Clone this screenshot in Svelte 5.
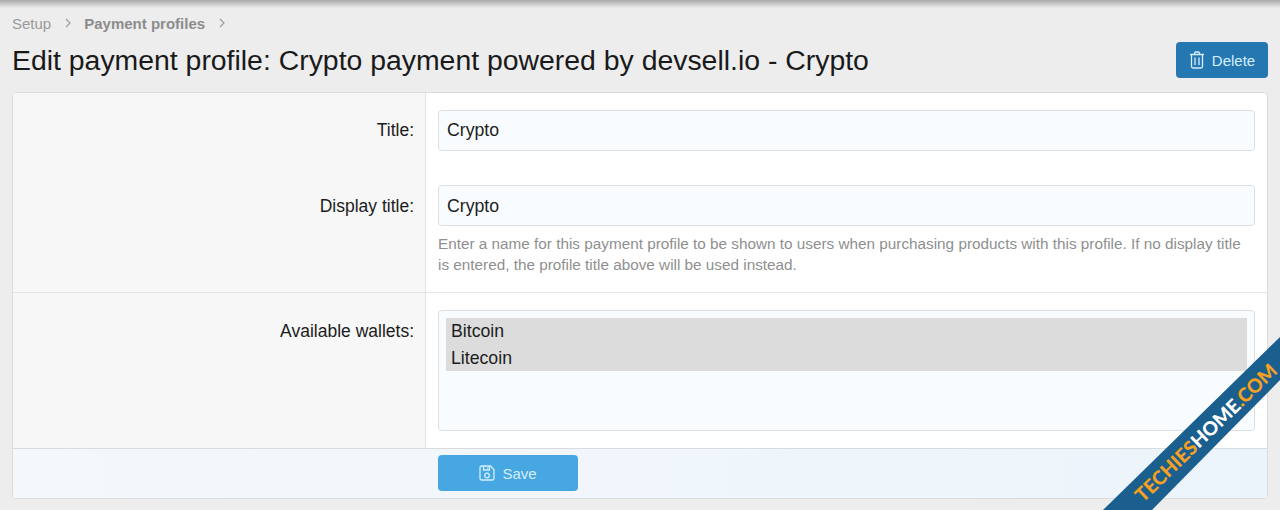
<script lang="ts">
  const wallets = ['Bitcoin', 'Litecoin'];
</script>

<div class="page">
  <div class="topbar"></div>

  <nav class="crumbs">
    <span class="crumb">Setup</span>
    <svg class="sep" viewBox="0 0 8 10"><path d="M2 1l4 4-4 4" /></svg>
    <span class="crumb current">Payment profiles</span>
    <svg class="sep" viewBox="0 0 8 10"><path d="M2 1l4 4-4 4" /></svg>
  </nav>

  <header class="head">
    <h1>Edit payment profile: Crypto payment powered by devsell.io - Crypto</h1>
    <button class="btn delete">
      <svg class="icon" viewBox="0 0 16 18">
        <path d="M1 3.500h14M2.500 3.500v12a1.500 1.500 0 0 0 1.500 1.500h8a1.500 1.500 0 0 0 1.500-1.500v-12M5.500 3.500V2.200a1.200 1.200 0 0 1 1.200-1.200h2.600a1.200 1.200 0 0 1 1.200 1.200v1.300M6 6.500v7.500M10 6.500v7.500" />
      </svg>
      Delete
    </button>
  </header>

  <section class="card">
    <div class="row first">
      <div class="label">Title:</div>
      <div class="field">
        <div class="input">Crypto</div>
      </div>
    </div>
    <div class="row second">
      <div class="label">Display title:</div>
      <div class="field">
        <div class="input">Crypto</div>
        <p class="help">Enter a name for this payment profile to be shown to users when purchasing products with this profile. If no display title is entered, the profile title above will be used instead.</p>
      </div>
    </div>
    <div class="row third">
      <div class="label">Available wallets:</div>
      <div class="field">
        <div class="listbox">
          {#each wallets as wallet}
            <div class="option">{wallet}</div>
          {/each}
        </div>
      </div>
    </div>
    <footer class="submit">
      <div class="submit-gap"></div>
      <button class="btn save">
        <svg class="icon" viewBox="0 0 16 16">
          <path d="M2.500 1h9L15 4.500v9a1.500 1.500 0 0 1-1.500 1.500h-11A1.500 1.500 0 0 1 1 13.500v-11A1.500 1.500 0 0 1 2.500 1zM4.500 1v4h6V1M8.700 2.400v1.300" />
          <circle cx="8" cy="10.500" r="2.300" />
        </svg>
        Save
      </button>
    </footer>
  </section>

  <svg class="ribbon" viewBox="0 0 180 175">
    <polygon points="3,175 180,2 180,45 52,175" class="band" />
    <text transform="translate(43 168) rotate(-44)" class="mark">TECHIES<tspan class="white">HOME</tspan>.COM</text>
  </svg>
</div>

<style>
  :global(body) {
    margin: 0;
    background: #ededed;
  }

  .page {
    position: relative;
    width: 1280px;
    height: 510px;
    overflow: hidden;
    font-family: "Liberation Sans", Arial, sans-serif;
    color: #1c1c1c;
    background: #ededed;
  }

  .topbar {
    height: 8px;
    background: linear-gradient(#a9a9a9, #ececec);
  }

  .crumbs {
    display: flex;
    align-items: center;
    gap: 12.500px;
    height: 30px;
    padding-left: 12px;
    font-size: 15px;
    color: #9a9a9a;
  }

  .current {
    font-weight: 700;
    color: #8c8c8c;
  }

  .sep {
    width: 8px;
    height: 10px;
    fill: none;
    stroke: #9a9a9a;
    stroke-width: 1.100;
  }

  .head {
    display: flex;
    align-items: center;
    justify-content: space-between;
    height: 44px;
    margin-bottom: 10px;
    padding: 0 12px;
  }

  h1 {
    margin: 0;
    font-size: 28.400px;
    font-weight: 400;
    color: #1a1a1a;
  }

  .btn {
    display: flex;
    align-items: center;
    justify-content: center;
    gap: 7px;
    height: 36px;
    border: 0;
    border-radius: 4px;
    font: inherit;
    font-size: 15px;
    color: #d5eefc;
  }

  .icon {
    fill: none;
    stroke: currentColor;
    stroke-width: 1.300;
  }

  .delete {
    width: 92px;
    background: #2577b1;
  }

  .delete .icon {
    width: 16px;
    height: 18px;
  }

  .save {
    width: 140px;
    margin-bottom: 1px;
    background: #47a7e2;
  }

  .save .icon {
    width: 16px;
    height: 16px;
  }

  .card {
    width: 1256px;
    height: 407px;
    margin-left: 12px;
    box-sizing: border-box;
    display: flex;
    flex-direction: column;
    border: 1px solid #dcdcdc;
    border-radius: 4px;
    overflow: hidden;
    background: #fff;
  }

  .row {
    display: grid;
    grid-template-columns: 413px 1fr;
  }

  .first { height: 75px; }
  .second { height: 124px; border-bottom: 1px solid #e4e4e4; }
  .third { flex: 1; }

  .label {
    background: #f7f7f7;
    border-right: 1px solid #e4e4e4;
    padding: 27px 11px 0 0;
    text-align: right;
    font-size: 17.500px;
    line-height: 21px;
  }

  .second .label,
  .third .label {
    padding-top: 28px;
  }

  .field {
    padding: 17px 12px 0 12px;
  }

  .input {
    box-sizing: border-box;
    height: 41px;
    padding: 0 8px;
    display: flex;
    align-items: center;
    border: 1px solid #dcdfe1;
    border-radius: 4px;
    background: #f9fcfe;
    font-size: 17.700px;
  }

  .second .input {
    padding-top: 1px;
  }

  .help {
    margin: 7px 0 0;
    font-size: 15.300px;
    line-height: 21px;
    color: #8f8f8f;
  }

  .listbox {
    box-sizing: border-box;
    height: 121px;
    padding: 7px;
    border: 1px solid #dcdfe1;
    border-radius: 4px;
    background: #f9fcfe;
  }

  .option {
    height: 26.500px;
    padding-left: 5px;
    line-height: 27.500px;
    background: #dcdcdd;
    font-size: 17.700px;
  }

  .submit {
    display: flex;
    align-items: center;
    height: 49px;
    border-top: 1px solid #d8dcdf;
    background: linear-gradient(90deg, #f4f8fb, #ecf4fb);
  }

  .submit-gap {
    width: 425px;
  }

  .ribbon {
    position: absolute;
    right: 0;
    bottom: 0;
    width: 180px;
    height: 175px;
  }

  .band {
    fill: #1a5f8e;
  }

  .mark {
    font-family: Lato, "Liberation Sans", sans-serif;
    font-weight: 900;
    font-size: 19.300px;
    fill: #f5a020;
  }

  .white {
    fill: #fff;
  }
</style>
